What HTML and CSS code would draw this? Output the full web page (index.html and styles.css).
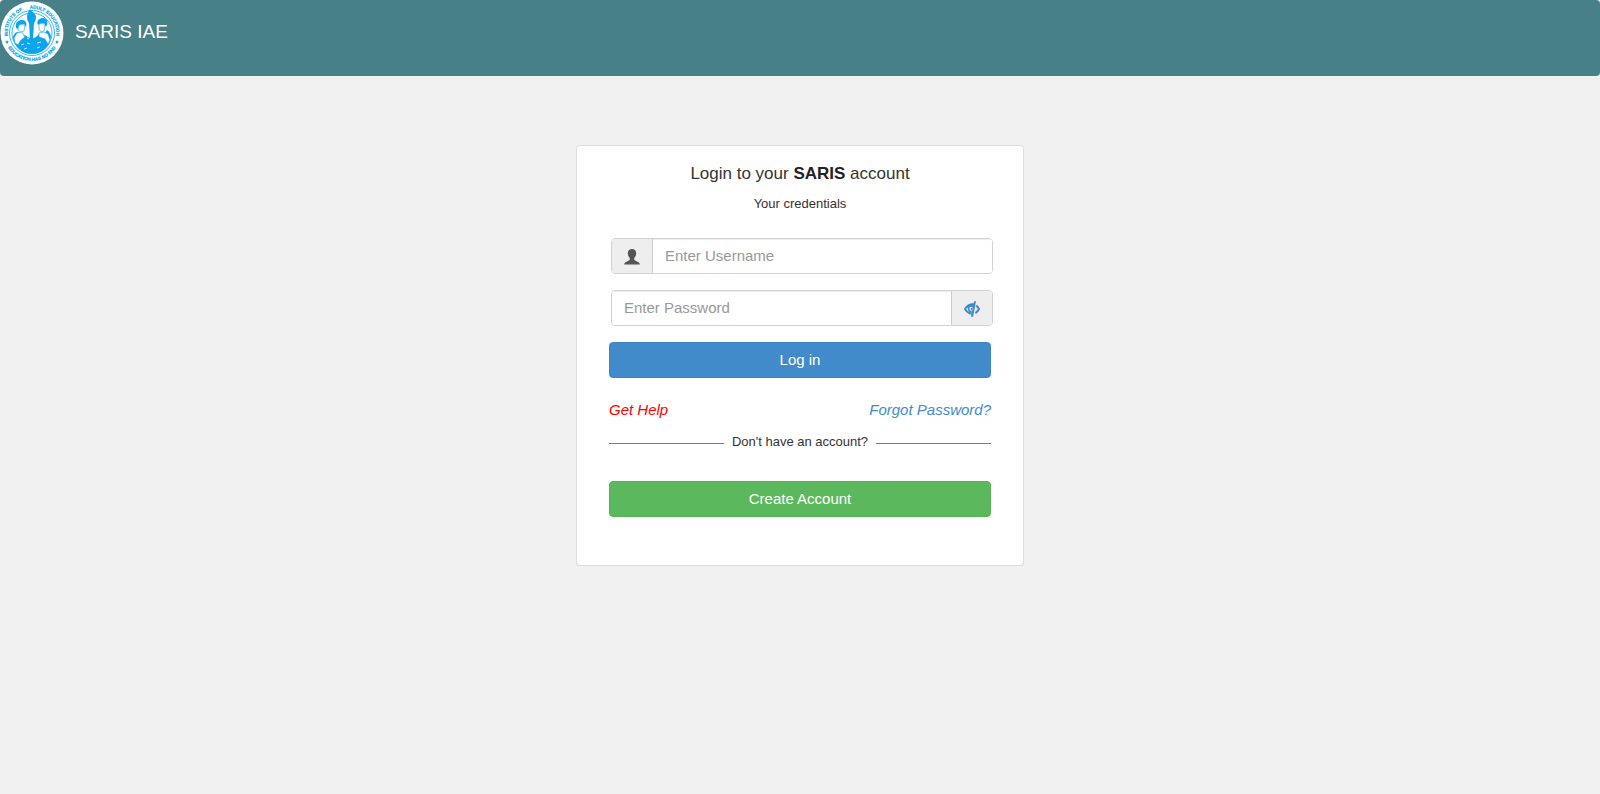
FILE: index.html
```html
<!DOCTYPE html>
<html lang="en">
<head>
    <meta charset="UTF-8">
    <meta name="viewport" content="width=device-width, initial-scale=1">
    <title>SARIS IAE</title>
    <link rel="stylesheet" href="styles.css">
</head>
<body>
    <nav class="navbar">
        <svg class="logo" viewBox="0 0 64 64" role="img" aria-label="Institute of Adult Education">
            <defs>
                <path id="arcTop" d="M7.900 35 A24.300 24.300 0 1 1 56.100 35"/>
                <path id="arcBottom" d="M4 32 A28 28 0 0 0 60 32"/>
            </defs>
            <circle cx="32" cy="32" r="31.500" fill="#fff"/>
            <g fill="none" stroke="#0aa5ee">
                <circle cx="32" cy="32" r="22.500" stroke-width="0.8"/>
                <circle cx="32" cy="32" r="20" stroke-width="0.8"/>
            </g>
            <g class="logo-text">
                <text><textPath href="#arcTop" startOffset="0">INSTITUTE OF</textPath></text>
                <text text-anchor="end"><textPath href="#arcTop" startOffset="100%">ADULT EDUCATION</textPath></text>
                <text text-anchor="middle"><textPath href="#arcBottom" startOffset="50%">EDUCATION HAS NO END</textPath></text>
            </g>
            <g fill="#0aa5ee">
                <!-- torch -->
                <path d="M30 8c-1 2-3 4-3 8 0 3 1 5 2 6l1 16h3l1-16c1-1 2-3 2-6 0-3-2-3-3-5-1 0-2-2-3-3z"/>
                <!-- bodies and book -->
                <path d="M13 36c1-3 2-4 4-5l6 2 5 3 4 2 4-2 4-4 4 1 3-4c2 1 4 4 4 7-1 10-9 17-19 17s-18-7-19-17z"/>
                <!-- hair of the two figures -->
                <path d="M16 27c-1-6 2-8 6-8s5 3 4 7l-2-3-5 1-1 4zM38 24c-2-4 1-7 5-7s6 4 3 9l-2-4-5 1z"/>
            </g>
            <g fill="#fff" stroke="#0aa5ee" stroke-width="0.600">
                <path d="M19 24l3-1 3 2-1 5-3 1-3-2zM39 23l4-1 2 3-1 5-3 1-2-3z"/>
                <path d="M14 37l3-5 5-1 3 5-4 3-3 5-3-2zM39 32l5-1 4 2 2 6-2 4-3-5-6-2z"/>
            </g>
            <path d="M21 44l3-1M27 42l3 1M37 42l4-1M24 48l3-1M37 47l3-1M27 37l2 1" fill="none" stroke="#fff" stroke-width="0.800"/>
            <g fill="#0aa5ee">
                <path d="M7 39l.6 1.2 1.3.2-.9.9.2 1.4-1.2-.7-1.2.7.2-1.4-.9-.9 1.3-.2z"/>
                <path d="M57 39l.6 1.2 1.3.2-.9.9.2 1.4-1.2-.7-1.2.7.2-1.4-.9-.9 1.3-.2z"/>
            </g>
        </svg>
        <a href="#" class="brand">SARIS IAE</a>
    </nav>

    <main class="login-card">
        <h1 class="login-title">Login to your <strong>SARIS</strong> account</h1>
        <p class="login-subtitle">Your credentials</p>

        <form class="login-form">
            <div class="input-group">
                <label class="addon addon-left" for="username" aria-label="Username">
                    <svg width="16" height="16" viewBox="0 0 16 16" fill="#555">
                        <path d="M8 0C5.200 0 3.700 1.800 3.800 4.500c.1 2 .9 3.600 2 4.600v1.400c-.3.800-1.500 1.300-2.800 1.900C1.300 13.200.2 13.700.1 15.500h15.800c-.1-1.800-1.200-2.300-2.900-3.100-1.300-.6-2.500-1.100-2.800-1.900V9.100c1.100-1 1.900-2.600 2-4.600C12.300 1.800 10.800 0 8 0z"/>
                    </svg>
                </label>
                <input type="text" id="username" class="form-control" placeholder="Enter Username">
            </div>
            <div class="input-group">
                <input type="password" id="password" class="form-control" placeholder="Enter Password" aria-label="Password">
                <button type="button" class="addon addon-right" aria-label="Show password">
                    <svg width="16" height="16" viewBox="0 0 16 16" fill="none" stroke="#428bca">
                        <path d="M9.500 3.200C5.500 3 2.500 5.500 1 8c1.500 2.500 3.800 4.300 6.800 4.800" stroke-width="2"/>
                        <path d="M2.500 6C4.500 3 7.500 2.200 11 2.500L9.800 7C7.500 4.800 5.500 5.500 4.800 8z" fill="#428bca" stroke="none"/>
                        <path d="M4.700 6.500c-.4 2.500.8 4 3 4.700" stroke-width="1.500"/>
                        <path d="M8.500 6.800c-1.300.2-1.600 1.500-.6 2.300" stroke-width="1.200"/>
                        <path d="M12.300 4.400C13.500 5.500 14.500 6.700 15 8c-.7 1.500-1.900 2.900-3.600 4.100" stroke-width="2"/>
                        <path d="M10 .3h2L9.100 15.700H7z" fill="#428bca" stroke="none"/>
                    </svg>
                </button>
            </div>
            <button type="submit" class="btn btn-primary">Log in</button>
        </form>

        <div class="links">
            <a href="#" class="help">Get Help</a>
            <a href="#">Forgot Password?</a>
        </div>

        <div class="divider">Don't have an account?</div>

        <button type="button" class="btn btn-success">Create Account</button>
    </main>
</body>
</html>
```

FILE: styles.css
```css
* {
    box-sizing: border-box;
}

body {
    margin: 0;
    font-family: "Liberation Sans", Arial, sans-serif;
    font-size: 13px;
    line-height: 18px;
    color: #333;
    background-color: #f0f0f0;
}

a {
    color: #428bca;
    text-decoration: none;
}

.navbar {
    display: flex;
    align-items: flex-start;
    gap: 11px;
    height: 76px;
    padding-top: 1px;
    background-color: #478087;
    border-radius: 4px;
}

.logo {
    width: 64px;
    height: 64px;
}

.logo-text {
    fill: #0aa5ee;
    stroke: #0aa5ee;
    stroke-width: 0.2px;
    font-size: 4.6px;
    font-weight: bold;
}

.brand {
    color: #fff;
    font-size: 19px;
    line-height: 20px;
    padding-top: 21px;
}

.login-card {
    width: 28%;
    min-width: 320px;
    margin: 69px auto 0;
    padding: 18px 32px 48px;
    background-color: #fff;
    border: 1px solid #ddd;
    border-radius: 4px;
    box-shadow: 0 1px 1px rgba(0, 0, 0, 0.05);
}

.login-title {
    margin: 0;
    font-size: 17px;
    font-weight: normal;
    line-height: 20px;
    text-align: center;
}

.login-title strong {
    color: #222;
}

.login-subtitle {
    margin: 11px 0 25px;
    text-align: center;
}

.input-group {
    display: flex;
    height: 36px;
    margin: 0 -2px 16px 2px;
    border: 1px solid #d2d2d2;
    border-radius: 4px;
    overflow: hidden;
}

.addon {
    display: flex;
    align-items: center;
    justify-content: center;
    width: 41px;
    padding: 2px 0 0;
    background-color: #eee;
    border: 0;
    cursor: pointer;
}

.addon-left {
    border-right: 1px solid #ccc;
}

.addon-right {
    border-left: 1px solid #ccc;
}

.form-control {
    flex: 1;
    min-width: 0;
    padding: 0 12px 2px;
    border: 0;
    outline: none;
    font-family: inherit;
    font-size: 15px;
    color: #555;
    background-color: #fff;
    box-shadow: inset 0 1px 1px rgba(0, 0, 0, 0.075);
}

.form-control::placeholder {
    color: #999;
}

.btn {
    display: block;
    width: 100%;
    height: 36px;
    padding: 0 0 1px;
    border: 1px solid transparent;
    border-radius: 4px;
    font-family: inherit;
    font-size: 15px;
    color: #fff;
    cursor: pointer;
}

.btn-primary {
    background-color: #428bca;
    border-color: #3c86c5;
}

.btn-success {
    background-color: #5cb85c;
    border-color: #54b354;
}

.links {
    display: flex;
    justify-content: space-between;
    margin: 23px 0 14px;
    font-size: 15px;
    font-style: italic;
}

.links .help {
    color: #f00;
}

.divider {
    display: flex;
    align-items: center;
    gap: 8px;
    margin-bottom: 30px;
}

.divider::before,
.divider::after {
    content: "";
    flex: 1;
    margin-top: 3px;
    border-top: 1px solid #807878;
}
```
